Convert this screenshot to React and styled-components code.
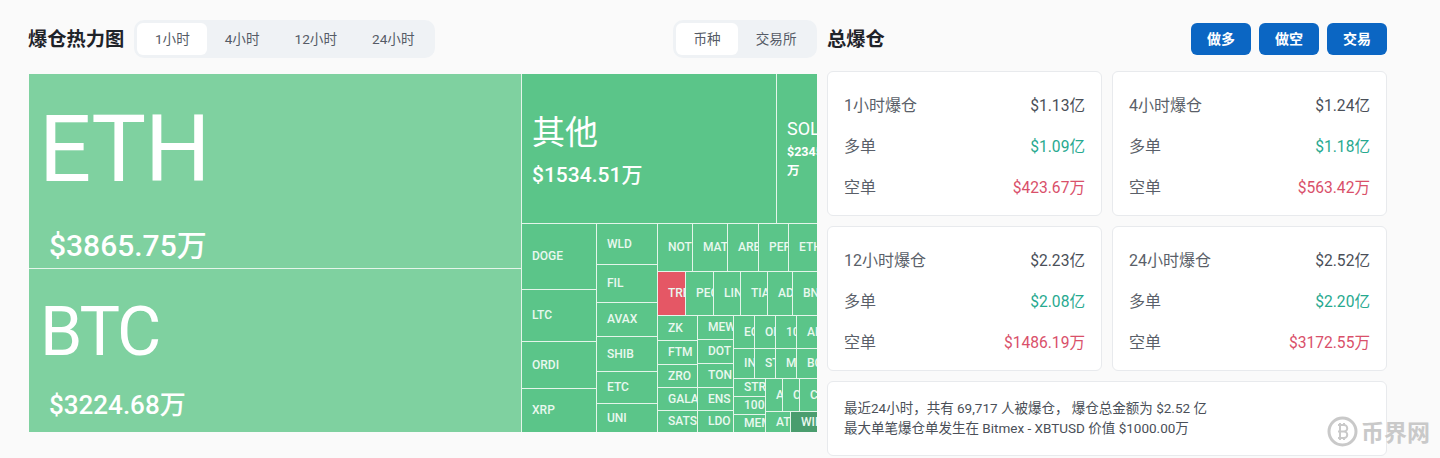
import React from "react";
import styled, { createGlobalStyle } from "styled-components";

const GlobalStyle = createGlobalStyle`
  html, body {
    margin: 0;
    height: 458px;
    overflow: hidden;
    background: #fafafa;
    font-family: Roboto, "Noto Sans CJK SC", sans-serif;
  }
  * { box-sizing: border-box; }
`;

const Page = styled.div`
  position: relative;
  display: flex;
  gap: 10px;
  width: 1440px;
  height: 458px;
  padding-left: 28px;
`;

const LeftCol = styled.div`
  width: 789px;
  padding-top: 20px;
`;

const RightCol = styled.div`
  width: 560px;
  padding-top: 23px;
`;

const Header = styled.div`
  display: flex;
  align-items: center;
  justify-content: space-between;
  height: 38px;
  margin-bottom: 16px;
`;

const HeaderGroup = styled.div`
  display: flex;
  align-items: center;
  gap: 10px;
`;

const Title = styled.h2`
  margin: 0;
  padding-bottom: 2px;
  font-size: 19.3px;
  font-weight: 700;
  color: #1f2329;
`;

const Tabs = styled.div`
  display: flex;
  height: 38px;
  padding: 3px;
  background: #eff2f5;
  border-radius: 10px;
`;

const Tab = styled.div`
  display: flex;
  align-items: center;
  padding: 0 17.5px 2px;
  font-size: 13.6px;
  color: #555b66;
  background: ${(p) => (p.$active ? "#fff" : "transparent")};
  border-radius: 6px;
`;

const Treemap = styled.div`
  display: flex;
  width: 788px;
  height: 358px;
  margin-left: 1px;
  gap: 1px;
  overflow: hidden;
  background: #e4f5ea;
`;

const Slice = styled.div`
  display: flex;
  flex-direction: ${(p) => p.$dir};
  flex: 0 0 ${(p) => p.$size}px;
  gap: 1px;
  min-width: 0;
  min-height: 0;
`;

const toneColors = {
  light: "#7fd1a0",
  base: "#5bc589",
  red: "#e55765",
  dark: "#4a9d6e",
};

const Cell = styled.div`
  display: flex;
  flex-direction: column;
  justify-content: center;
  flex: 0 0 ${(p) => p.$size}px;
  padding-left: ${(p) => p.$pad}px;
  padding-top: ${(p) => p.$top}px;
  overflow: hidden;
  color: ${(p) => p.$color};
  background: ${(p) => toneColors[p.$tone]};
`;

const CellName = styled.div`
  font-size: ${(p) => p.$fs}px;
  font-weight: ${(p) => p.$fw};
  line-height: ${(p) => p.$lh};
  letter-spacing: ${(p) => p.$ls}px;
  white-space: nowrap;
`;

const CellValue = styled.div`
  margin-left: ${(p) => p.$indent}px;
  margin-top: ${(p) => p.$gap}px;
  font-size: ${(p) => p.$fs}px;
  font-weight: ${(p) => p.$fw};
  line-height: 1.5;
`;

const leaf = (name, size, extra = {}) => ({ name, size, ...extra });
const row = (size, ...children) => ({ dir: "row", size, children });
const col = (size, ...children) => ({ dir: "column", size, children });

// sizes are the px of each block along its parent's direction
const tree = row(
  788,
  col(
    492,
    leaf("ETH", 194, { tone: "light", fs: 92, fw: 400, lh: 1.2, ls: -1, pad: 10, top: 21, color: "#fff", value: "$3865.75万", vfs: 30, indent: 10, gap: 17 }),
    leaf("BTC", 163, { tone: "light", fs: 68, fw: 400, lh: 1.2, ls: -2, pad: 11, top: 16, color: "#fff", value: "$3224.68万", vfs: 26, indent: 9, gap: 12 })
  ),
  col(
    295,
    row(
      149,
      leaf("其他", 254, { fs: 33, fw: 400, lh: 1.3, top: 6, color: "#fff", value: "$1534.51万", vfs: 21, gap: 5 }),
      leaf("SOL", 60, { fs: 18, fw: 400, lh: 1.3, color: "#fff", value: "$2345.18万", vfs: 12.5, vfw: 700, gap: 3 })
    ),
    row(
      208,
      col(
        74,
        leaf("DOGE", 65),
        leaf("LTC", 51),
        leaf("ORDI", 46),
        leaf("XRP", 43)
      ),
      col(
        60,
        leaf("WLD", 40),
        leaf("FIL", 37),
        leaf("AVAX", 33),
        leaf("SHIB", 34),
        leaf("ETC", 31),
        leaf("UNI", 28)
      ),
      col(
        170,
        row(
          47,
          leaf("NOT", 34),
          leaf("MATIC", 34),
          leaf("ARB", 30),
          leaf("PEPE", 29),
          leaf("ETHFI", 40)
        ),
        row(
          43,
          leaf("TRB", 27, { tone: "red" }),
          leaf("PEOPLE", 27),
          leaf("LINK", 26),
          leaf("TIA", 26),
          leaf("ADA", 24),
          leaf("BNB", 30)
        ),
        row(
          116,
          col(
            39,
            leaf("ZK", 24),
            leaf("FTM", 23),
            leaf("ZRO", 22),
            leaf("GALA", 22),
            leaf("SATS", 21)
          ),
          col(
            35,
            leaf("MEW", 23),
            leaf("DOT", 23),
            leaf("TON", 23),
            leaf("ENS", 22),
            leaf("LDO", 21)
          ),
          col(
            90,
            row(
              32,
              leaf("EOS", 20),
              leaf("OP", 20),
              leaf("1000SATS", 20),
              leaf("APT", 30)
            ),
            row(
              29,
              leaf("INJ", 20),
              leaf("STX", 20),
              leaf("MKR", 20),
              leaf("BCH", 30)
            ),
            row(
              53,
              col(
                31,
                leaf("STRK", 17),
                leaf("1000PEPE", 17),
                leaf("MEME", 17)
              ),
              col(
                58,
                row(
                  32,
                  leaf("AAVE", 16),
                  leaf("CRV", 16),
                  leaf("CFX", 24)
                ),
                row(
                  20,
                  leaf("ATOM", 24),
                  leaf("WIF", 33, { tone: "dark" })
                )
              )
            )
          )
        )
      )
    )
  )
);

const renderNode = (node) => {
  if (node.children) {
    return (
      <Slice key={node.children[0].name || node.size + node.dir} $dir={node.dir} $size={node.size}>
        {node.children.map(renderNode)}
      </Slice>
    );
  }
  const { name, size, tone = "base", fs = 12, fw = 500, lh = 1.4, ls = 0, pad = 10, top = 0, color = "#e9f8ef", value, vfs, vfw = 500, indent = 0, gap = 0 } = node;
  return (
    <Cell key={name} $size={size} $tone={tone} $pad={pad} $top={top} $color={color}>
      <CellName $fs={fs} $fw={fw} $lh={lh} $ls={ls}>{name}</CellName>
      {value && <CellValue $fs={vfs} $fw={vfw} $indent={indent} $gap={gap}>{value}</CellValue>}
    </Cell>
  );
};

const Buttons = styled.div`
  display: flex;
  gap: 8px;
`;

const ActionButton = styled.button`
  width: 60px;
  height: 32px;
  padding: 0 0 2px;
  border: none;
  border-radius: 6px;
  font-family: inherit;
  font-size: 14px;
  font-weight: 700;
  color: #fff;
  background: #0b66c3;
`;

const RightHeader = styled.div`
  display: flex;
  align-items: center;
  justify-content: space-between;
  height: 32px;
  margin-bottom: 16px;
`;

const CardGrid = styled.div`
  display: grid;
  grid-template-columns: 275px 275px;
  grid-template-rows: 145px 145px auto;
  gap: 10px;
`;

const Card = styled.div`
  padding: 11px 16px;
  background: #fff;
  border: 1px solid #e8eaed;
  border-radius: 6px;
`;

const StatRow = styled.div`
  display: flex;
  align-items: center;
  justify-content: space-between;
  height: 41px;
  font-size: 16px;
  color: #5a5f69;
`;

const StatValue = styled.span`
  font-size: 15.6px;
  color: ${(p) => p.$color};
`;

const SummaryCard = styled(Card)`
  grid-column: 1 / 3;
  height: 75px;
  padding: 16px;
  font-size: 13.5px;
  line-height: 20px;
  color: #4a4f58;
`;

const Watermark = styled.div`
  position: absolute;
  left: 1327px;
  top: 414px;
  display: flex;
  align-items: center;
  gap: 3px;
  font-size: 23px;
  font-weight: 700;
  color: #c9c9c9;
`;

const cards = [
  { title: "1小时爆仓", total: "$1.13亿", long: "$1.09亿", short: "$423.67万" },
  { title: "4小时爆仓", total: "$1.24亿", long: "$1.18亿", short: "$563.42万" },
  { title: "12小时爆仓", total: "$2.23亿", long: "$2.08亿", short: "$1486.19万" },
  { title: "24小时爆仓", total: "$2.52亿", long: "$2.20亿", short: "$3172.55万" },
];

export default function App() {
  return (
    <>
      <GlobalStyle />
      <Page>
        <LeftCol>
          <Header>
            <HeaderGroup>
              <Title>爆仓热力图</Title>
              <Tabs>
                <Tab $active>1小时</Tab>
                <Tab>4小时</Tab>
                <Tab>12小时</Tab>
                <Tab>24小时</Tab>
              </Tabs>
            </HeaderGroup>
            <Tabs>
              <Tab $active>币种</Tab>
              <Tab>交易所</Tab>
            </Tabs>
          </Header>
          <Treemap>{tree.children.map(renderNode)}</Treemap>
        </LeftCol>
        <RightCol>
          <RightHeader>
            <Title>总爆仓</Title>
            <Buttons>
              <ActionButton>做多</ActionButton>
              <ActionButton>做空</ActionButton>
              <ActionButton>交易</ActionButton>
            </Buttons>
          </RightHeader>
          <CardGrid>
            {cards.map((c) => (
              <Card key={c.title}>
                <StatRow>
                  <span>{c.title}</span>
                  <StatValue $color="#4a4f58">{c.total}</StatValue>
                </StatRow>
                <StatRow>
                  <span>多单</span>
                  <StatValue $color="#27a98f">{c.long}</StatValue>
                </StatRow>
                <StatRow>
                  <span>空单</span>
                  <StatValue $color="#d9506a">{c.short}</StatValue>
                </StatRow>
              </Card>
            ))}
            <SummaryCard>
              最近24小时，共有 69,717 人被爆仓， 爆仓总金额为 $2.52 亿
              <br />
              最大单笔爆仓单发生在 Bitmex - XBTUSD 价值 $1000.00万
            </SummaryCard>
          </CardGrid>
        </RightCol>
        <Watermark>
          <svg width="31" height="31" viewBox="0 0 31 31" fill="none" stroke="#c9c9c9">
            <circle cx="15.5" cy="15.5" r="13.5" strokeWidth="3" />
            <path d="M11 9h6a3 3 0 0 1 0 6.5h-6M17 15.5a3.2 3.2 0 0 1 0 6.5h-6M13 7v17M17 7v2M17 22v2" strokeWidth="2" />
          </svg>
          币界网
        </Watermark>
      </Page>
    </>
  );
}
